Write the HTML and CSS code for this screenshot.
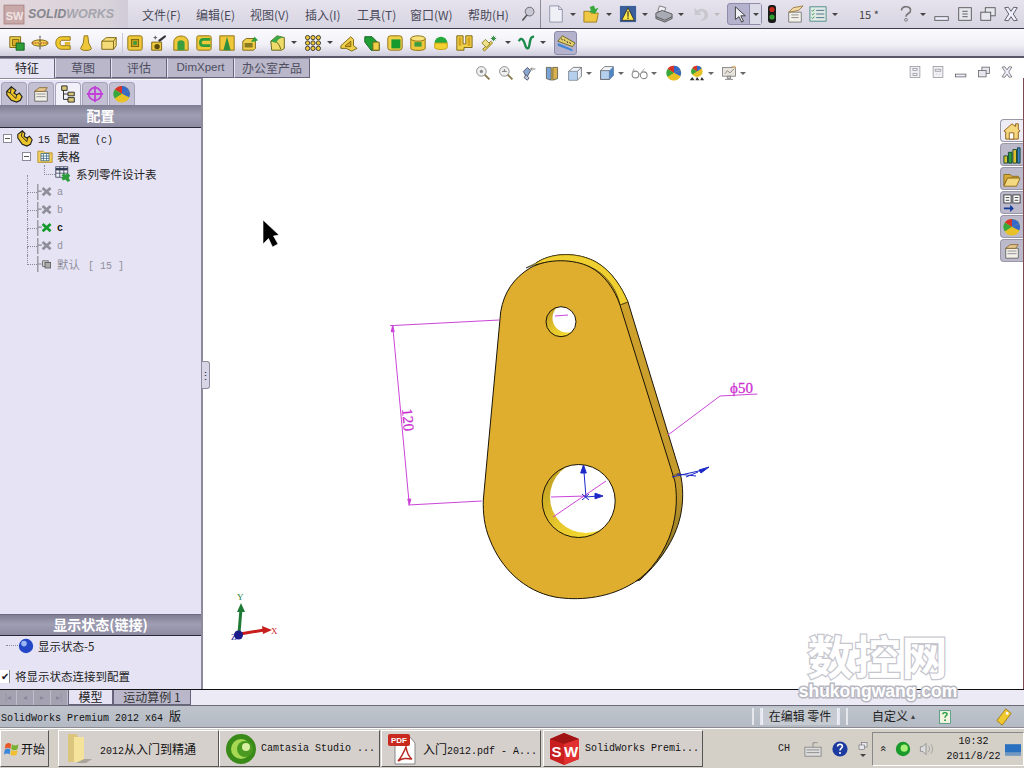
FILE: index.html
```html
<!DOCTYPE html>
<html lang="zh">
<head>
<meta charset="utf-8">
<title>SolidWorks Premium 2012</title>
<link rel="stylesheet" href="styles.css">
</head>
<body>
<svg class="defs" width="0" height="0" aria-hidden="true">
<defs>
<symbol id="boss" viewBox="0 0 20 20"><path d="M2 3h12v12H2z" fill="#f0cf4a" stroke="#77610f"/><path d="M5 6h7v7H5z" fill="#d9ac28" stroke="#77610f"/><path d="M9 10h9v8H9z" fill="#2e9e3c" stroke="#135c1d"/></symbol>
<symbol id="rev" viewBox="0 0 20 20"><ellipse cx="10" cy="10" rx="9" ry="3.5" fill="#f3d04c" stroke="#77610f"/><path d="M10 2v16" stroke="#333" stroke-dasharray="3 1"/><path d="M1 10h18" stroke="#a33" stroke-dasharray="2 1"/></symbol>
<symbol id="sweep" viewBox="0 0 20 20"><path d="M18 3H9C3 3 2 8 2 10s1 7 7 7h9v-4H9c-3 0-3-6 0-6h9z" fill="#f0c92e" stroke="#8a6d0d"/><path d="M12 9h6v3h-6z" fill="#e2b11e"/></symbol>
<symbol id="loft" viewBox="0 0 20 20"><path d="M8 2h4l1 8 3 6c0 3-12 3-12 0l3-6z" fill="#eec83a" stroke="#8a6d0d"/></symbol>
<symbol id="bound" viewBox="0 0 20 20"><path d="M2 8l5-4h11v9l-3 4H2z" fill="#f5dc78" stroke="#77610f"/><path d="M2 8h13v9M15 8l3-4" fill="none" stroke="#77610f"/></symbol>
<symbol id="cut" viewBox="0 0 20 20"><rect x="2" y="2" width="16" height="16" rx="2" fill="#eec83a" stroke="#8a6d0d"/><rect x="6" y="6" width="8" height="8" fill="#c99d1c" stroke="#77610f"/><rect x="8" y="8" width="4" height="4" fill="#3a9e3e"/></symbol>
<symbol id="wiz" viewBox="0 0 20 20"><path d="M3 9h11v9H3z" fill="#eec83a" stroke="#77610f"/><circle cx="9" cy="14" r="3" fill="#5a4a10"/><path d="M10 7l8-6 1 2-7 6z" fill="#333"/><path d="M7 2v4M5 4h4" stroke="#555"/></symbol>
<symbol id="arch" viewBox="0 0 20 20"><path d="M2 18V9c0-9 16-9 16 0v9z" fill="#eec83a" stroke="#8a6d0d"/><path d="M6 18V10c0-4 8-4 8 0v8z" fill="#3a9e3e"/></symbol>
<symbol id="csweep" viewBox="0 0 20 20"><rect x="2" y="2" width="16" height="16" rx="2" fill="#eec83a" stroke="#8a6d0d"/><path d="M17 6H9c-4 0-4 7 0 7h8" fill="none" stroke="#2e9e3c" stroke-width="3"/></symbol>
<symbol id="cloft" viewBox="0 0 20 20"><path d="M2 2h16v16H2z" fill="#eec83a" stroke="#8a6d0d"/><path d="M10 3l4 15H6z" fill="#2e8e3c"/></symbol>
<symbol id="cbound" viewBox="0 0 20 20"><path d="M2 8l4-3h10v11l-2 2H2z" fill="#f0cf4a" stroke="#77610f"/><path d="M4 10h9v5H4z" fill="#8a7a20"/><path d="M11 9l4-6 4 4-3 1z" fill="#2e9e3c"/></symbol>
<symbol id="fillet" viewBox="0 0 20 20"><path d="M2 8l7-6 8 2v12l-3 2H3z" fill="#efdb6a" stroke="#5c5c10"/><path d="M2 8c5-1 9 1 11 9" fill="none" stroke="#5c5c10"/><path d="M2 8l7-6 8 2c-5 0-8 3-9 6z" fill="#3aa84a"/></symbol>
<symbol id="pattern" viewBox="0 0 20 20"><g fill="#eec83a" stroke="#333"><circle cx="4" cy="4" r="2.4"/><circle cx="10" cy="4" r="2.4"/><circle cx="16" cy="4" r="2.4"/><circle cx="4" cy="10" r="2.4"/><circle cx="10" cy="10" r="2.4"/><circle cx="16" cy="10" r="2.4"/><circle cx="4" cy="16" r="2.4"/><circle cx="10" cy="16" r="2.4"/><circle cx="16" cy="16" r="2.4"/></g></symbol>
<symbol id="rib" viewBox="0 0 20 20"><path d="M1 13L12 3l3 3v7l4 3-6 3-6-3-6 0z" fill="#f0cf4a" stroke="#77610f"/><path d="M6 13l6-5v6H6z" fill="#d3a51e" stroke="#77610f"/></symbol>
<symbol id="draft" viewBox="0 0 20 20"><path d="M2 3h8l8 8v7H9L2 9z" fill="#1f9e35" stroke="#0e5c1c"/><path d="M11 9h7v9h-7z" fill="#f0cf4a" stroke="#77610f"/></symbol>
<symbol id="shell" viewBox="0 0 20 20"><rect x="2" y="2" width="16" height="16" rx="3" fill="#f0cf4a" stroke="#8a6d0d"/><rect x="6" y="6" width="10" height="10" fill="#169a2d"/></symbol>
<symbol id="cyl" viewBox="0 0 20 20"><path d="M2 5v11c0 3 16 3 16 0V5z" fill="#eec83a" stroke="#8a6d0d"/><ellipse cx="10" cy="5" rx="8" ry="3" fill="#f7e27c" stroke="#8a6d0d"/><rect x="6" y="9" width="8" height="5" fill="#3a9e3e"/></symbol>
<symbol id="dome" viewBox="0 0 20 20"><path d="M3 10a7 7 0 0 1 14 0z" fill="#25a83c"/><path d="M3 10h14v5c0 3-14 3-14 0z" fill="#f2d030" stroke="#c49b12"/></symbol>
<symbol id="flex" viewBox="0 0 20 20"><path d="M2 2h7v9h3V2h7v13h-9v3H2z" fill="#f0cf4a" stroke="#77610f"/><path d="M4 4h3v9H4zM14 4h3v9h-3z" fill="#d3a51e"/></symbol>
<symbol id="wand" viewBox="0 0 20 20"><path d="M3 17l9-9 2 2-9 9z" fill="#e8d058" stroke="#8a7a20"/><path d="M2 10l4-4 5 5-4 4z" fill="#efe08a" stroke="#8a7a20"/><path d="M15 2v6M12 5h6M13 3l4 4M17 3l-4 4" stroke="#2a8a38"/></symbol>
<symbol id="curve" viewBox="0 0 20 20"><path d="M2 8c3-6 6 0 7 4s4 7 5-1 3-8 5-8" fill="none" stroke="#1c8a4a" stroke-width="2.6"/></symbol>
<symbol id="ruler" viewBox="0 0 22 22"><path d="M2 9l5-6 14 8-3 4z" fill="#e7d16a" stroke="#68602a"/><path d="M6 6l1 2M9 7l1 2M12 9l1 2M15 10l1 2" stroke="#333"/><path d="M2 11l16 7v2L2 14z" fill="#3f86d6"/></symbol>
<symbol id="pin" viewBox="0 0 20 20"><circle cx="12" cy="7" r="5.5" fill="#c8c8d4" stroke="#555"/><path d="M9 11l-6 7" stroke="#555" stroke-width="2"/></symbol>
<symbol id="doc" viewBox="0 0 20 20"><path d="M3 1h10l4 4v14H3z" fill="#eef0f6" stroke="#8c90a8"/><path d="M13 1v4h4" fill="none" stroke="#8c90a8"/></symbol>
<symbol id="open" viewBox="0 0 20 20"><path d="M1 7h6l2 2h8l-2 10H1z" fill="#f0c843" stroke="#9a7a18"/><path d="M9 1h5v4h4l-6 5-6-5h3z" fill="#38a83c" transform="rotate(-20 12 6)"/></symbol>
<symbol id="warn" viewBox="0 0 20 20"><rect x="1" y="1" width="18" height="18" fill="#3a5f9a"/><path d="M10 3l7 14H3z" fill="#ffe84a" stroke="#333"/><path d="M9.4 7h1.2v6H9.4zM9.4 14h1.2v1.6H9.4z" fill="#222"/></symbol>
<symbol id="print" viewBox="0 0 20 20"><path d="M5 1l7 2-2 6-7-2z" fill="#eef0f6" stroke="#777"/><path d="M1 9l7-3 11 4v5l-8 4-10-4z" fill="#a8aab4" stroke="#555"/><path d="M1 13l10 4 8-4" fill="none" stroke="#555"/></symbol>
<symbol id="undo" viewBox="0 0 20 20"><path d="M4 3v8h8L9 8c3-2 6 0 6 3s-2 5-5 6c5 1 9-2 9-6 0-6-7-9-12-5z" fill="#c8c8ce"/></symbol>
<symbol id="arrow" viewBox="0 0 20 20"><path d="M6 2v14l4-3 3 6 2-1-3-6h5z" fill="#eef0f6" stroke="#333"/></symbol>
<symbol id="light" viewBox="0 0 10 20"><rect x="1" y="1" width="8" height="18" rx="3" fill="#1a1a1a"/><circle cx="5" cy="5.5" r="2.6" fill="#c92a1c"/><circle cx="5" cy="13" r="2.6" fill="#2e9e2e"/></symbol>
<symbol id="prop" viewBox="0 0 20 20"><path d="M3 8h14v11H3z" fill="#f2f0e8" stroke="#777"/><path d="M6 11h8M6 14h8" stroke="#888"/><path d="M3 8l5-5 11-2-5 5z" fill="#f3d9a4" stroke="#9a7a40"/></symbol>
<symbol id="opts" viewBox="0 0 20 20"><rect x="1" y="2" width="18" height="16" fill="#dfe9e6" stroke="#4a8a84"/><path d="M8 6h9M8 10h9M8 14h9" stroke="#4a6a80"/><path d="M3 6l1 1 2-2M3 10l1 1 2-2M3 14l1 1 2-2" fill="none" stroke="#2a8a3c"/></symbol>
<symbol id="help" viewBox="0 0 20 20"><path d="M5 6c0-6 11-5 10 0 0 4-5 3-5 7" fill="none" stroke="#777" stroke-width="1.800"/><circle cx="10" cy="16.500" r="1.600" fill="none" stroke="#777"/></symbol>
<symbol id="w-min" viewBox="0 0 20 20"><rect x="2" y="13" width="15" height="4" fill="#eef" stroke="#555"/></symbol>
<symbol id="w-full" viewBox="0 0 20 20"><rect x="3" y="3" width="14" height="14" fill="#e6e6ee" stroke="#555"/><path d="M7 7h6M7 10h6M7 13h6" stroke="#555"/></symbol>
<symbol id="w-res" viewBox="0 0 20 20"><rect x="7" y="3" width="11" height="9" fill="#e6e6ee" stroke="#555"/><rect x="2" y="8" width="11" height="9" fill="#e6e6ee" stroke="#555"/></symbol>
<symbol id="w-x" viewBox="0 0 20 20"><path d="M3 3l4-.5L10 7l3-4.500 4 .5-4.500 7 4.500 7-4 .5-3-4.500-3 4.500-4-.5L7.500 10z" fill="#eef" stroke="#555"/></symbol>
<symbol id="t-conf" viewBox="0 0 20 20"><path d="M2 7l5-5 5 4-2 3 3 2 3-2 3 4-2 4-4 2-6-2-5-6z" fill="#eec62c" stroke="#222" stroke-width="1.300"/><path d="M7 2L6 9l6 6 1-4M2 7l4 2" fill="none" stroke="#222"/></symbol>
<symbol id="t-prop" viewBox="0 0 20 20"><path d="M3 7h14v11H3z" fill="#f2f0e8" stroke="#666"/><path d="M5 10h10M5 13h10" stroke="#888"/><path d="M3 7l5-4h9l-3 4z" fill="#e7c890" stroke="#8a6a30"/></symbol>
<symbol id="t-cfg" viewBox="0 0 20 20"><path d="M3 1h6v5H3zM10 8h7v4h-7zM10 14h7v5h-7z" fill="#d9c878" stroke="#222"/><path d="M5 6v10h5M5 10h5" fill="none" stroke="#222"/></symbol>
<symbol id="t-dim" viewBox="0 0 20 20"><circle cx="10" cy="10" r="7" fill="none" stroke="#c040d8" stroke-width="2"/><path d="M10 1v18M1 10h18" stroke="#c040d8" stroke-width="2"/></symbol>
<symbol id="ball" viewBox="0 0 20 20"><circle cx="10" cy="10" r="9" fill="#e9c126"/><path d="M10 10L2 5a9 9 0 0 1 8-4z" fill="#d6332a"/><path d="M10 10V1a9 9 0 0 1 8 5z" fill="#3569c9"/><path d="M10 10l8-4a9 9 0 0 1 0 8z" fill="#3569c9"/><path d="M10 10l-8-5a9 9 0 0 0 0 10z" fill="#38a83c"/><path d="M10 10l8 4a9 9 0 0 1-16 1z" fill="#e8c126"/></symbol>
<symbol id="part" viewBox="0 0 20 20"><path d="M2 6l5-4 3 3-1 3 3 2 3-2 3 4-2 5-4 2-5-2-5-7z" fill="#edc32a" stroke="#222" stroke-width="1.200"/><path d="M7 2L6 8l6 6 1-4" fill="none" stroke="#222"/></symbol>
<symbol id="folder" viewBox="0 0 20 20"><path d="M1 4h7l2 2h9v12H1z" fill="#f3cf63" stroke="#b08b1f"/><rect x="5" y="7" width="10" height="9" fill="#fff" stroke="#3a6a88"/><path d="M5 10h10M5 13h10M8 7v9M12 7v9" stroke="#3a6a88"/></symbol>
<symbol id="table" viewBox="0 0 20 20"><rect x="1" y="1" width="15" height="13" fill="#f2f2fa" stroke="#333b55"/><path d="M1 4h15" stroke="#333b55" stroke-width="3"/><path d="M1 9h15M6 1v13M11 1v13" stroke="#333b55"/><path d="M8 12l3-3 2 2 3-2 3 3-2 3 2 3-3 2-3-3-3 1-2-3 2-2z" fill="#2a9a3a"/></symbol>
<symbol id="cfg-x" viewBox="0 0 20 20"><path d="M1 0v20M1 9h5" stroke="#8a8a90" stroke-width="1.500" fill="none"/><path d="M7 5l10 9M17 5L7 14" stroke="currentColor" stroke-width="3.400" fill="none"/></symbol>
<symbol id="cfg-def" viewBox="0 0 20 20"><path d="M1 0v20M1 10h5" stroke="#8a8a90" stroke-width="1.500" fill="none"/><rect x="7" y="6" width="7" height="7" fill="#ccc" stroke="#666"/><rect x="10" y="8" width="7" height="7" fill="#aaa" stroke="#555"/></symbol>
<symbol id="sphere" viewBox="0 0 20 20"><circle cx="10" cy="10" r="9" fill="#2447c8"/><circle cx="7.500" cy="7" r="3.500" fill="#9ab6f4"/></symbol>
<symbol id="zoomfit" viewBox="0 0 20 20"><circle cx="8" cy="8" r="6" fill="#eef0f0" stroke="#777"/><circle cx="8" cy="8" r="2" fill="#888"/><path d="M12 12l6 6" stroke="#8a7a50" stroke-width="2.4"/></symbol>
<symbol id="zoomarea" viewBox="0 0 20 20"><circle cx="8" cy="8" r="6" fill="#eef0f0" stroke="#777"/><path d="M5 8h6M8 5v3" stroke="#666"/><path d="M12 12l6 6" stroke="#8a7a50" stroke-width="2.4"/></symbol>
<symbol id="prev" viewBox="0 0 20 20"><path d="M3 8l5-5 4 4-5 9z" fill="#8aa6cf" stroke="#445"/><path d="M6 12l4 4-2 3-4-3z" fill="#bccbe2" stroke="#445"/><path d="M12 5h6M14 3l-2 2 2 2" fill="none" stroke="#666"/></symbol>
<symbol id="section" viewBox="0 0 20 20"><path d="M3 3h6v16l-6-2z" fill="#7aa4d8" stroke="#554"/><path d="M11 3h6v14l-6 2z" fill="#d9b24c" stroke="#554"/><path d="M9 3h2v16H9z" fill="#a88a3a"/></symbol>
<symbol id="orient" viewBox="0 0 20 20"><path d="M2 8l6-5h10v11l-5 5H2z" fill="#eef2fa" stroke="#666"/><path d="M2 8h11v11M13 8l5-5" fill="none" stroke="#666"/><path d="M2 8h11v11H2z" fill="#9dc0e8" opacity=".7"/></symbol>
<symbol id="cube" viewBox="0 0 20 20"><path d="M2 7l5-5h11v11l-5 5H2z" fill="#f2f5fb" stroke="#666"/><path d="M2 7h11v11H2z" fill="#b5d0ee" stroke="#666"/><path d="M13 7l5-5v11l-5 5z" fill="#4e86c6"/></symbol>
<symbol id="glasses" viewBox="0 0 24 20"><circle cx="6" cy="12" r="4.500" fill="none" stroke="#888" stroke-width="1.400"/><circle cx="17" cy="13" r="4.500" fill="none" stroke="#888" stroke-width="1.400"/><path d="M10 11l3 1M2 9l2-5M14 9l4-5" stroke="#888" fill="none"/></symbol>
<symbol id="scene" viewBox="0 0 20 20"><circle cx="10" cy="8" r="7" fill="#e8c126"/><path d="M10 8L4 4a7 7 0 0 1 6-3z" fill="#d6332a"/><path d="M10 8V1a7 7 0 0 1 6 3z" fill="#3569c9"/><path d="M10 8L4 4a7 7 0 0 0 0 8z" fill="#38a83c"/><path d="M1 19l3-4 3 4zM8 19l2-4 3 4zM14 19l2-4 3 4z" fill="#333"/></symbol>
<symbol id="monitor" viewBox="0 0 20 20"><rect x="2" y="3" width="16" height="11" fill="#e8e4dc" stroke="#777"/><path d="M5 11l3-4 3 3 5-5" fill="none" stroke="#777"/><path d="M12 2l6-1v4z" fill="#d9b27a"/><path d="M8 14h4v3H8zM5 18h10" stroke="#777" fill="#ccc"/></symbol>
<symbol id="w-a" viewBox="0 0 20 20"><rect x="3" y="2" width="14" height="16" fill="#f2f2f6" stroke="#8a8a92"/><rect x="7" y="5" width="6" height="3" fill="none" stroke="#8a8a92"/><path d="M7 12h6v3H7z" fill="none" stroke="#8a8a92"/></symbol>
<symbol id="w-b" viewBox="0 0 20 20"><rect x="3" y="2" width="14" height="16" fill="#f2f2f6" stroke="#8a8a92"/><path d="M6 6h8v3H6zM7 13h1M12 13h1" fill="none" stroke="#8a8a92"/></symbol>
<symbol id="home" viewBox="0 0 20 20"><path d="M1 10l9-8 4 3V2h3v6l2 2-2 1v8H3v-8z" fill="#f5d77d" stroke="#8a5a18"/><path d="M7 19v-7h5v7z" fill="#fff" stroke="#8a5a18"/></symbol>
<symbol id="bars" viewBox="0 0 20 20"><path d="M1 11h4v8H1z" fill="#d8c22c" stroke="#143"/><path d="M6 7h4v12H6z" fill="#2a9a3a" stroke="#143"/><path d="M11 4h4v15h-4z" fill="#e0c02c" stroke="#143"/><path d="M16 2h3v17h-3z" fill="#4080d0" stroke="#143"/></symbol>
<symbol id="folder2" viewBox="0 0 20 20"><path d="M1 5h7l2 2h7v2H5l-4 8z" fill="#d9ad3a" stroke="#8a6a18"/><path d="M5 9h14l-4 9H1z" fill="#f5d980" stroke="#8a6a18"/></symbol>
<symbol id="lib" viewBox="0 0 20 20"><rect x="1" y="1" width="8" height="9" fill="#fff" stroke="#333"/><rect x="11" y="1" width="8" height="9" fill="#fff" stroke="#333"/><path d="M3 4h4M3 7h4M13 4h4M13 7h4" stroke="#333"/><path d="M1 16h9" stroke="#123a9a" stroke-width="2"/><path d="M8 12l4 4-4 4z" fill="#123a9a"/></symbol>
<symbol id="win" viewBox="0 0 20 20"><path d="M2 4c3-2 5-2 7 0l-1 6c-2-2-4-2-7 0z" fill="#e8582a"/><path d="M10 4c3 2 5 2 8 0l-1 6c-3 2-5 2-8 0z" fill="#78b030"/><path d="M1 11c3-2 5-2 7 0l-1 6c-2-2-4-2-7 0z" fill="#3a86d8"/><path d="M9 11c3 2 5 2 8 0l-1 6c-3 2-5 2-8 0z" fill="#f0c030"/></symbol>
<symbol id="bigfolder" viewBox="0 0 32 32"><path d="M4 1h8l3 4v24H4z" fill="#dcc57c"/><path d="M10 4h10v25H10z" fill="#f5e39c"/><path d="M20 26h8l-6 4H12z" fill="#a8a49a"/></symbol>
<symbol id="camt" viewBox="0 0 32 32"><circle cx="16" cy="16" r="15" fill="#3a8a1a"/><circle cx="16" cy="16" r="10" fill="#a6d854"/><circle cx="20" cy="16" r="8" fill="#4a9a22"/><circle cx="21" cy="14" r="4" fill="#d8f0a0"/></symbol>
<symbol id="pdf" viewBox="0 0 32 32"><path d="M8 4h15l5 6v21H8z" fill="#fff" stroke="#888"/><rect x="1" y="1" width="22" height="12" rx="2" fill="#c8281e"/><text class="pdf-label" x="4" y="10">PDF</text><path d="M19 14c-3 7-5 11-8 14 5-3 8-3 14-2-3-2-5-6-6-12z" fill="none" stroke="#b8281e" stroke-width="1.500"/></symbol>
<symbol id="sw" viewBox="0 0 32 32"><path d="M15 0L30 6v20L15 32 1 26V6z" fill="#c81e1e"/><path d="M15 0L30 6 15 11 1 6z" fill="#a01414"/><path d="M15 11v21l15-6V6z" fill="#e03030"/><text class="sw-label" x="2.500" y="24">S</text><text class="sw-label" x="15" y="24">W</text></symbol>
<symbol id="kbd" viewBox="0 0 20 20"><rect x="1" y="8" width="18" height="10" fill="#ddd" stroke="#888"/><path d="M3 11h14M3 14h14M10 8V3h5" stroke="#888" fill="none"/></symbol>
<symbol id="helpblue" viewBox="0 0 20 20"><circle cx="10" cy="10" r="9.500" fill="#1c3aa0"/><path d="M7 7c0-4 6-4 6 0 0 2-3 2-3 5" stroke="#fff" stroke-width="2" fill="none"/><circle cx="10" cy="15" r="1.300" fill="#fff"/></symbol>
<symbol id="greenring" viewBox="0 0 20 20"><circle cx="10" cy="10" r="9" fill="#1a9a2a"/><circle cx="11.500" cy="9" r="4.500" fill="#a8f07a"/></symbol>
<symbol id="speaker" viewBox="0 0 20 20"><path d="M3 7h3l4-4v14l-4-4H3z" fill="#ddd" stroke="#888"/><path d="M13 6c2 3 2 5 0 8M16 4c3 4 3 8 0 12" stroke="#999" fill="none"/></symbol>
<symbol id="screen" viewBox="0 0 20 20"><rect x="0" y="4" width="20" height="14" fill="#2a70c0"/><rect x="0" y="14" width="20" height="4" fill="#7098c0"/></symbol>
<symbol id="tag" viewBox="0 0 20 20"><path d="M12 1l6 5-10 13-6-5z" fill="#f0c830" stroke="#a07a10"/><circle cx="13.500" cy="6" r="1.500" fill="#fff"/></symbol>
<symbol id="qbook" viewBox="0 0 20 20"><rect x="2" y="1" width="16" height="18" fill="#f4f4e0" stroke="#2a8a6a"/><path d="M7 6c0-3 6-3 6 0 0 2-3 2-3 5" stroke="#1a9a3a" stroke-width="2" fill="none"/><circle cx="10" cy="14.500" r="1.300" fill="#1a9a3a"/></symbol>
<linearGradient id="crescent" x1="0" y1="0" x2="1" y2="1"><stop offset="0" stop-color="#b89520"/><stop offset=".5" stop-color="#e6c62c"/><stop offset="1" stop-color="#fbe632"/></linearGradient>
<linearGradient id="rim" x1="0" y1="0" x2="0" y2="1"><stop offset="0" stop-color="#d3a42c"/><stop offset=".7" stop-color="#c39a2c"/><stop offset="1" stop-color="#6e6420"/></linearGradient>
<clipPath id="big-hole"><circle cx="578.700" cy="501" r="36.500"/></clipPath>
<clipPath id="small-hole"><circle cx="561" cy="321.700" r="15"/></clipPath>
</defs>
</svg>

<div class="app">
  <header class="titlebar">
    <div class="logo">
      <svg class="logo-mark" viewBox="0 0 20 20"><rect x="1" y="2" width="18" height="17" fill="#c9a8a8" stroke="#b08a8a"/><text class="logo-sw" x="2.500" y="15">SW</text></svg>
      <span class="logo-text">SOLID<span class="logo-thin">WORKS</span></span>
    </div>
    <nav class="menu">
      <span class="menu-item m1">文件(F)</span>
      <span class="menu-item m2">编辑(E)</span>
      <span class="menu-item m3">视图(V)</span>
      <span class="menu-item m4">插入(I)</span>
      <span class="menu-item m5">工具(T)</span>
      <span class="menu-item m6">窗口(W)</span>
      <span class="menu-item m7">帮助(H)</span>
      <svg class="ic16"><use href="#pin"/></svg>
    </nav>
    <div class="quick">
      <svg class="ic18"><use href="#doc"/></svg><i class="caret"></i>
      <svg class="ic18"><use href="#open"/></svg><i class="caret"></i>
      <svg class="ic18"><use href="#warn"/></svg><i class="caret"></i>
      <svg class="ic18"><use href="#print"/></svg><i class="caret"></i>
      <svg class="ic18"><use href="#undo"/></svg><i class="caret caret-off"></i>
      <span class="select-btn"><svg class="ic18"><use href="#arrow"/></svg><span class="select-drop"><i class="caret caret-flush"></i></span></span>
      <svg class="light"><use href="#light"/></svg>
      <svg class="ic18 q-prop"><use href="#prop"/></svg>
      <svg class="ic18"><use href="#opts"/></svg><i class="caret"></i>
      <span class="doc-name">15 *</span>
      <svg class="ic18"><use href="#help"/></svg><i class="caret"></i>
      <span class="winbtns">
        <svg class="ic18"><use href="#w-min"/></svg>
        <svg class="ic18"><use href="#w-full"/></svg>
        <svg class="ic18"><use href="#w-res"/></svg>
        <svg class="ic18"><use href="#w-x"/></svg>
      </span>
    </div>
  </header>

  <div class="cmdbar">
    <svg class="tool"><use href="#boss"/></svg>
    <svg class="tool"><use href="#rev"/></svg>
    <svg class="tool"><use href="#sweep"/></svg>
    <svg class="tool"><use href="#loft"/></svg>
    <svg class="tool"><use href="#bound"/></svg>
    <i class="cmd-sep"></i>
    <svg class="tool"><use href="#cut"/></svg>
    <svg class="tool"><use href="#wiz"/></svg>
    <svg class="tool"><use href="#arch"/></svg>
    <svg class="tool"><use href="#csweep"/></svg>
    <svg class="tool"><use href="#cloft"/></svg>
    <svg class="tool"><use href="#cbound"/></svg>
    <svg class="tool g-fillet"><use href="#fillet"/></svg><i class="caret"></i>
    <svg class="tool g-pat"><use href="#pattern"/></svg><i class="caret"></i>
    <svg class="tool g-rib"><use href="#rib"/></svg>
    <svg class="tool"><use href="#draft"/></svg>
    <svg class="tool"><use href="#shell"/></svg>
    <svg class="tool"><use href="#cyl"/></svg>
    <svg class="tool"><use href="#dome"/></svg>
    <svg class="tool"><use href="#flex"/></svg>
    <svg class="tool g-wand"><use href="#wand"/></svg><i class="caret"></i>
    <svg class="tool g-curve"><use href="#curve"/></svg><i class="caret"></i>
    <span class="ruler-btn"><svg class="ic20"><use href="#ruler"/></svg></span>
  </div>

  <main class="workspace">
    <div class="tabs">
      <span class="tab tab-active">特征</span>
      <span class="tab t-sketch">草图</span>
      <span class="tab t-eval">评估</span>
      <span class="tab t-dim-x">DimXpert</span>
      <span class="tab t-office">办公室产品</span>
    </div>
    <div class="panes">
      <aside class="panel">
        <div class="ptabs">
          <span class="ptab"><svg class="ic18"><use href="#t-conf"/></svg></span>
          <span class="ptab"><svg class="ic18"><use href="#t-prop"/></svg></span>
          <span class="ptab ptab-active"><svg class="ic18"><use href="#t-cfg"/></svg></span>
          <span class="ptab"><svg class="ic18"><use href="#t-dim"/></svg></span>
          <span class="ptab"><svg class="ic18"><use href="#ball"/></svg></span>
        </div>
        <h2 class="phead">配置</h2>
        <div class="tree">
          <div class="row lvl0"><i class="box"></i><svg class="ic18"><use href="#part"/></svg><span class="label"><span class="mono-s cfg-num">15</span>配置<span class="mono-s cfg-name">(c)</span></span></div>
          <div class="row lvl1"><i class="box"></i><svg class="ic16"><use href="#folder"/></svg><span class="label">表格</span></div>
          <div class="row lvl2"><i class="dash dash-l"></i><svg class="ic16"><use href="#table"/></svg><span class="label">系列零件设计表</span></div>
          <div class="row lvl1b off"><i class="dash"></i><svg class="ic16"><use href="#cfg-x"/></svg><span class="label mono">a</span></div>
          <div class="row lvl1b off"><i class="dash"></i><svg class="ic16"><use href="#cfg-x"/></svg><span class="label mono">b</span></div>
          <div class="row lvl1b on"><i class="dash"></i><svg class="ic16"><use href="#cfg-x"/></svg><span class="label mono">c</span></div>
          <div class="row lvl1b off"><i class="dash"></i><svg class="ic16"><use href="#cfg-x"/></svg><span class="label mono">d</span></div>
          <div class="row lvl1b off"><i class="dash"></i><svg class="ic16"><use href="#cfg-def"/></svg><span class="label">默认<span class="mono-s cfg-size">[ 15 ]</span></span></div>
        </div>
        <h2 class="phead phead-low">显示状态(链接)</h2>
        <div class="states">
          <div class="state"><i class="dash dash-s"></i><svg class="ic16"><use href="#sphere"/></svg><span class="label">显示状态-5</span></div>
          <label class="link"><i class="check">✔</i><span class="label">将显示状态连接到配置</span></label>
        </div>
      </aside>
      <section class="canvas">
        <svg class="scene-svg" viewBox="203 78 821 612">
          <path class="back" d="M536 263C552 252 578 252 596 262C612 271 622 288 628 302L678 466C683 480 684 497 681 513C677 535 664 558 640 580L600 590L540 280Z"/>
          <path class="bevel" d="M526 268C550 258 585 258 604 276C613 285 618 295 620 305L628 302C622 288 612 271 596 262C578 252 552 252 536 263Z"/>
          <path class="face" d="M500.700 311.700C504 292 514 278 530 268C548 258 574 259 590 267C604 274 615 290 620 305L675 481.700C678 500 676 520 669 538C660 560 646 577 628 586C606 598 578 601 555 597C524 591 501 568 490 540C484 526 483 512 483.300 500Z"/>
          <path class="seam" d="M620 305L628 302M672 476L680 473"/>
          <circle class="hole-in" cx="561" cy="321.700" r="15"/>
          <circle class="hole-white" cx="567" cy="318" r="14.500" clip-path="url(#small-hole)"/>
          <circle class="hole-edge" cx="561" cy="321.700" r="15"/>
          <circle class="hole-in" cx="578.700" cy="501" r="36.500"/>
          <circle class="hole-white" cx="586" cy="497" r="36" clip-path="url(#big-hole)"/>
          <circle class="hole-edge" cx="578.700" cy="501" r="36.500"/>
          <g class="dim">
            <path d="M390 325.700L499.300 320M408.300 505L481.700 501M392.700 325.700L409.300 505M668 435L720 396L757.300 394M555 316L568 315"/>
            <path d="M553 517L606 481M551 497L586 496"/>
            <path class="dim-head" d="M392.700 325.700l-1.500 6h3zM409.300 505l-1.500-6h3z"/>
            <text class="dim-text" transform="translate(402 409) rotate(85)">120</text>
            <text class="dim-text" x="730" y="393">ϕ50</text>
          </g>
          <g class="axis">
            <path d="M586 497L584 472M586 497L598 496M672 477L703 470M677 474L696 476M686 477L698 472"/>
            <path class="axis-head" d="M583.500 465l2.800 8h-5.600zM603 496l-8 2.800v-5.600zM709 467l-10 3 2 3z"/>
            <path d="M582 494l7 6M589 494l-7 6"/>
          </g>
          <g class="triad">
            <path d="M239 633L241 609" stroke="#1e7a34" stroke-width="3"/>
            <path d="M241 603l4 9h-8z" fill="#1e7a34"/>
            <path d="M240 634L264 630" stroke="#c81e1e" stroke-width="3"/>
            <path d="M272 630l-9 4-1-8z" fill="#c81e1e"/>
            <circle cx="238.500" cy="635" r="4.500" fill="#1c1c8a"/>
            <text class="tri-y" x="237" y="600">Y</text>
            <text class="tri-x" x="271" y="634">X</text>
            <text class="tri-z" x="231" y="640">Z</text>
          </g>
          <path class="cursor" d="M263 220V244L268.500 238.500L272.500 247L278 244L273.500 236L279 235Z"/>
        </svg>

        <div class="viewbar">
          <svg class="ic16"><use href="#zoomfit"/></svg>
          <svg class="ic16"><use href="#zoomarea"/></svg>
          <svg class="ic16"><use href="#prev"/></svg>
          <svg class="ic16"><use href="#section"/></svg>
          <svg class="ic16"><use href="#orient"/></svg><i class="caret"></i>
          <svg class="ic16"><use href="#cube"/></svg><i class="caret"></i>
          <svg class="ic18"><use href="#glasses"/></svg><i class="caret"></i>
          <svg class="ic16 v-ball"><use href="#ball"/></svg>
          <svg class="ic16"><use href="#scene"/></svg><i class="caret"></i>
          <svg class="ic16"><use href="#monitor"/></svg><i class="caret"></i>
        </div>
        <div class="viewwin">
          <svg class="ic14"><use href="#w-a"/></svg>
          <svg class="ic14"><use href="#w-b"/></svg>
          <svg class="ic14"><use href="#w-min"/></svg>
          <svg class="ic14"><use href="#w-res"/></svg>
          <svg class="ic14"><use href="#w-x"/></svg>
        </div>

        <span class="grip">⋮</span>

        <div class="taskpane">
          <span class="tp tp-on"><svg class="ic18"><use href="#home"/></svg></span>
          <span class="tp"><svg class="ic18"><use href="#bars"/></svg></span>
          <span class="tp"><svg class="ic18"><use href="#folder2"/></svg></span>
          <span class="tp"><svg class="ic18"><use href="#lib"/></svg></span>
          <span class="tp"><svg class="ic18"><use href="#ball"/></svg></span>
          <span class="tp"><svg class="ic18"><use href="#t-prop"/></svg></span>
        </div>
      </section>
    </div>

    <div class="bottomtabs">
      <span class="navs"><i class="nav">|◂</i><i class="nav">◂</i><i class="nav">▸</i><i class="nav">▸|</i></span>
      <span class="btab btab-on">模型</span>
      <span class="btab btab-motion">运动算例 1</span>
    </div>

    <div class="watermark">
      <span class="wm-big">数控网</span>
      <span class="wm-small">shukongwang.com</span>
    </div>
  </main>

  <footer class="status">
    <span class="st-text">SolidWorks Premium 2012 x64 <span class="cjk12">版</span></span>
    <i class="st-grip"></i>
    <span class="st-cell st-edit">在编辑 零件</span>
    <i class="st-grip"></i>
    <span class="st-cell st-custom">自定义 <small class="st-up">▴</small></span>
    <svg class="ic14 st-q"><use href="#qbook"/></svg>
    <svg class="ic18 st-tag"><use href="#tag"/></svg>
  </footer>

  <div class="taskbar">
    <span class="tbtn start"><svg class="ic16"><use href="#win"/></svg><span class="cjk">开始</span></span>
    <span class="tbtn"><svg class="ic32"><use href="#bigfolder"/></svg><span class="tb-name">2012<span class="cjk12">从入门到精通</span></span></span>
    <span class="tbtn"><svg class="ic32"><use href="#camt"/></svg><span class="tb-name">Camtasia Studio ...</span></span>
    <span class="tbtn tb-pdf"><svg class="ic32"><use href="#pdf"/></svg><span class="tb-name"><span class="cjk12">入门</span>2012.pdf - A...</span></span>
    <span class="tbtn tb-sw"><svg class="ic32"><use href="#sw"/></svg><span class="tb-name">SolidWorks Premi...</span></span>
    <div class="langbar">
      <span class="lang">CH</span>
      <svg class="ic18"><use href="#kbd"/></svg>
      <svg class="ic16"><use href="#helpblue"/></svg>
      <span class="lang-rest"><svg class="ic10"><use href="#w-res"/></svg><i class="caret caret-flush"></i></span>
    </div>
    <div class="tray">
      <span class="tray-up">«</span>
      <svg class="ic16 tr-green"><use href="#greenring"/></svg>
      <svg class="ic16 tr-spk"><use href="#speaker"/></svg>
      <span class="clock">10:32<br>2011/8/22</span>
      <svg class="ic16 tr-scr"><use href="#screen"/></svg>
    </div>
  </div>
</div>
</body>
</html>
```
FILE: styles.css
```css
* { box-sizing: border-box; }
html, body { margin: 0; padding: 0; }
body { width: 1024px; height: 768px; overflow: hidden; font: 12px "Noto Sans CJK SC", "Liberation Sans", sans-serif; color: #222; background: #d4d0c8; }
.defs { position: absolute; }
svg { flex: none; display: block; }
i { font-style: normal; }
.ic10 { width: 10px; height: 10px; }
.ic14 { width: 14px; height: 14px; }
.ic16 { width: 16px; height: 16px; }
.ic18 { width: 18px; height: 18px; }
.ic20 { width: 20px; height: 20px; }
.ic32 { width: 32px; height: 32px; }
.app { width: 1024px; height: 768px; display: flex; flex-direction: column; }
.cjk12 { font: 12px "Noto Sans CJK SC", sans-serif; }
.pdf-label { font: bold 8px "Liberation Sans", sans-serif; fill: #fff; }
.sw-label { font: bold 15px "Liberation Sans", sans-serif; fill: #fff; }
.logo-sw { font: bold 10px "Liberation Sans", sans-serif; fill: #efe4e4; }

.caret { width: 0; height: 0; flex: none; border: 3px solid transparent; border-top: 3px solid #444; border-bottom: 0; margin: 0 5px 0 7px; }
.caret-off { border-top-color: #bbb; }
.caret-flush { margin: 0; }

.titlebar { height: 29px; flex: none; display: flex; align-items: center; background: linear-gradient(#e6e3ee, #d8d5e2); border-bottom: 1px solid #3c3a48; }
.logo { width: 128px; height: 28px; flex: none; display: flex; align-items: center; gap: 3px; padding-left: 3px; background: linear-gradient(90deg, #e3d7dc, #d8d2da 85%, #cfcbd8); }
.logo-mark { width: 22px; height: 22px; }
.logo-text { font: italic bold 12.500px "Liberation Sans", sans-serif; color: #86868e; }
.logo-thin { font-weight: bold; color: #a5a5ad; }
.menu { width: 413px; height: 28px; flex: none; display: flex; align-items: center; color: #4a4a5a; font-size: 12px; border-right: 1px solid #8e8c9c; }
.menu-item { white-space: nowrap; }
.m1 { margin-left: 14px; width: 54px; }
.m2, .m3, .m5 { width: 54px; }
.m4 { width: 52px; margin-left: 1px; }
.m6 { width: 58px; margin-left: -1px; }
.m7 { width: 52px; }
.quick { display: flex; align-items: center; padding-left: 6px; flex: 1; min-width: 0; }
.quick .caret { margin: 0 7px 0 5px; }
.quick .caret-flush { margin: 0; }
.select-btn { display: flex; align-items: center; width: 35px; height: 22px; padding-left: 2px; background: #b4b2cc; border: 1px solid #8e8cab; border-radius: 3px; }
.select-btn .ic18 { margin-right: 1px; }
.select-drop { display: flex; height: 20px; width: 12px; align-items: center; justify-content: center; background: #dcdbe8; border-left: 1px solid #8e8cab; }
.light { width: 10px; height: 20px; margin: 0 9px 0 5px; }
.q-prop { margin-right: 5px; }
.doc-name { width: 38px; margin-left: 14px; font-size: 11px; color: #444; }
.winbtns { display: flex; gap: 5px; }

.cmdbar { height: 29px; flex: none; display: flex; align-items: center; padding-left: 8px; background: linear-gradient(#fbfbfe, #f0eff6 60%, #cfcddc); border-bottom: 2px solid #5a5868; }
.tool { width: 18px; height: 18px; margin-right: 5px; }
.cmd-sep { width: 1px; height: 20px; background: #c8c6d4; margin: 0 3px 0 -1px; }
.cmdbar .caret { margin: 0; }
.g-fillet { margin-left: 5px; margin-right: 4px; }
.g-pat { margin-left: 7px; margin-right: 5px; }
.g-rib { margin-left: 7px; }
.g-wand { margin-left: 2px; margin-right: 7px; }
.g-curve { margin-left: 6px; margin-right: 5px; }
.ruler-btn { display: flex; align-items: center; justify-content: center; width: 23px; height: 24px; margin-left: 8px; background: #b4b2cc; border: 1px solid #8e8cab; border-radius: 3px; }

.workspace { position: relative; flex: 1; display: flex; flex-direction: column; min-height: 0; }
.tabs { height: 20px; flex: none; display: flex; align-items: stretch; background: #fff; font-size: 12px; }
.tab { display: flex; align-items: center; justify-content: center; height: 20px; padding-bottom: 2px; background: #b9b7c9; border: 1px solid #66647a; border-top-color: #9492a8; border-left: 1px solid #e6e4f0; color: #4e4e60; width: 56px; }
.tab-active { background: #e7e5f4; width: 55px; color: #222; border-bottom: 0; border-left: 0; }
.t-eval { width: 56px; }
.t-dim-x { width: 67px; font: 11.500px "Liberation Sans", sans-serif; }
.t-office { width: 76px; }
.panes { flex: 1; display: flex; min-height: 0; border-bottom: 1px solid #111; }
.panel { width: 203px; flex: none; display: flex; flex-direction: column; background: #e6e4f4; border-right: 2px solid #8d8b9b; }
.ptabs { height: 27px; flex: none; display: flex; align-items: flex-end; gap: 1px; padding-left: 1px; border-top: 1px solid #8d8b9b; box-shadow: inset 0 1px 0 #fff; }
.ptab { width: 26px; height: 23px; display: flex; align-items: center; justify-content: center; background: #c2c0d2; border: 1px solid #a5a3b8; border-bottom: 0; border-radius: 4px 4px 0 0; }
.ptab-active { background: #f2f1fa; }
.phead { margin: 0; height: 23px; flex: none; padding-bottom: 2px; display: flex; align-items: center; justify-content: center; font-size: 14px; font-weight: bold; color: #fff; background: linear-gradient(#7f7d92, #a09eb3 45%, #8e8ca2); border-bottom: 1px solid #2a2838; }
.phead-low { height: 22px; border-top: 1px solid #6c6a80; }
.tree { flex: 1; min-height: 0; padding-top: 1px; }
.row { position: relative; height: 18px; display: flex; align-items: center; gap: 2px; white-space: nowrap; }
.label { font-size: 11.500px; line-height: 18px; color: #222; }
.mono { font: 10px "Liberation Mono", monospace; }
.mono-s { font: 10px "Liberation Mono", monospace; }
.cfg-num { margin-right: 7px; }
.cfg-name { margin-left: 15px; }
.cfg-size { margin-left: 8px; white-space: pre; }
.lvl0 { padding-left: 3px; }
.lvl0 .ic18 { margin-left: 2px; margin-right: 2px; }
.lvl1 { padding-left: 22px; }
.lvl1 .ic16 { margin-left: 4px; margin-right: 2px; }
.lvl2 { padding-left: 55px; }
.lvl2 .ic16 { margin-right: 3px; }
.lvl1b { padding-left: 37px; }
.lvl1b .ic16 { margin-right: 2px; }
.box { width: 9px; height: 9px; flex: none; border: 1px solid #8a8a98; background: linear-gradient(90deg, transparent 1px, #555 1px, #555 6px, transparent 6px) center / 100% 1px no-repeat #fff; }
.dash { position: absolute; left: 27px; top: 0; width: 10px; height: 10px; border-left: 1px dotted #8a8a98; border-bottom: 1px dotted #8a8a98; }
.dash-l { left: 44px; width: 11px; }
.lvl1b .dash::before { content: ""; position: absolute; left: -1px; top: -8px; height: 8px; border-left: 1px dotted #8a8a98; }
.off { color: #8f8f9a; }
.off .label { color: #8f8f9a; }
.on { color: #169a2d; }
.on .label { color: #111; font-weight: bold; }
.states { height: 53px; flex: none; position: relative; }
.state { position: relative; height: 19px; display: flex; align-items: center; gap: 4px; padding-left: 18px; }
.dash-s { left: 6px; top: 9px; width: 12px; height: 1px; border-left: 0; }
.link { position: absolute; left: 0; top: 31px; display: flex; align-items: center; gap: 5px; }
.check { width: 10px; height: 13px; display: flex; align-items: center; justify-content: center; background: #fff; border-right: 1px solid #888; font-size: 10px; line-height: 1; color: #111; }

.canvas { position: relative; flex: 1; background: #fff; border-right: 1px solid #7a4a50; }
.scene-svg { position: absolute; left: 0; top: 0; width: 821px; height: 612px; }
.face { fill: #e0ae2e; stroke: #1a1508; stroke-width: 1; }
.back { fill: url(#rim); stroke: #1a1508; stroke-width: 1; }
.bevel { fill: #f0cf30; stroke: #1a1508; stroke-width: .6; }
.seam { stroke: #6a5414; fill: none; }
.hole-in { fill: url(#crescent); }
.hole-white { fill: #fff; }
.hole-edge { fill: none; stroke: #1a1508; stroke-width: 1; }
.dim path { fill: none; stroke: #cc44d8; stroke-width: 1; }
.dim .dim-head { fill: #cc44d8; }
.dim-text { font: 15px "Liberation Serif", serif; fill: #cc30d0; stroke: #cc30d0; stroke-width: .3; }
.axis path { fill: none; stroke: #1c28c8; stroke-width: 1; }
.axis .axis-head { fill: #1c28c8; }
.triad text { font: 9px "Liberation Serif", serif; }
.tri-y { fill: #1e7a34; }
.tri-x { fill: #c81e1e; }
.tri-z { fill: #1c1c8a; }
.cursor { fill: #000; stroke: #fff; stroke-width: .6; }

.viewbar { position: absolute; left: 272px; top: -14px; display: flex; align-items: center; }
.viewbar .ic16 { margin-right: 7px; }
.viewbar .ic16:has(+ .caret) { margin-right: 0; }
.viewbar .caret { margin: 0 7px 0 3px; border-top-color: #666; }
.viewbar .ic18 { margin-right: -1px; }
.viewbar .v-ball { margin-left: 2px; }
.viewwin { position: absolute; right: 9px; top: -13px; display: flex; gap: 9px; }
.grip { position: absolute; left: -1px; top: 283px; width: 8px; height: 28px; display: flex; align-items: center; justify-content: center; background: #d8d6e6; border: 1px solid #8d8b9b; border-left: 0; border-radius: 0 3px 3px 0; font-size: 11px; line-height: 1; color: #223; }
.taskpane { position: absolute; right: 0; top: 41px; width: 23px; display: flex; flex-direction: column; gap: 1px; }
.tp { height: 23px; display: flex; align-items: center; justify-content: center; background: #bcbaca; border: 1px solid #9a98a8; border-right: 0; border-radius: 4px 0 0 4px; }
.tp-on { background: #eeedf6; }

.bottomtabs { height: 15px; flex: none; display: flex; align-items: stretch; background: #eceaf5; font-size: 12px; }
.navs { width: 68px; display: flex; background: #a4a2b0; }
.nav { flex: 1; font-size: 8px; line-height: 14px; text-align: center; color: #8a8898; border-right: 1px solid #c0bece; }
.btab { display: flex; align-items: center; justify-content: center; height: 15px; width: 45px; line-height: 14px; background: #e6e4f4; border: 1px solid #66647a; border-top: 0; }
.btab-motion { width: 78px; background: #b9b7c9; color: #333; }

.watermark { position: absolute; left: 793px; top: 570px; width: 170px; display: flex; flex-direction: column; align-items: center; pointer-events: none; }
.wm-big { font: bold 46px/52px "Noto Sans CJK SC", sans-serif; color: #fff; -webkit-text-stroke: 2.500px #c6c6ce; paint-order: stroke fill; letter-spacing: 1px; }
.wm-small { margin-top: 3px; font: bold 17.500px/16px "Liberation Sans", sans-serif; color: #fff; -webkit-text-stroke: 3px #b8b8c2; paint-order: stroke fill; }

.status { height: 23px; flex: none; display: flex; align-items: center; background: linear-gradient(#bfc4cc, #b4bac4); border-top: 1px solid #6a6a78; border-bottom: 1px solid #8a8a90; }
.st-text { width: 752px; padding: 0 0 3px 1px; font: 10px "Liberation Mono", "Noto Sans CJK SC", monospace; color: #111; }
.st-grip { width: 10px; height: 17px; border-left: 2px solid #e6e8ee; border-right: 2px solid #e6e8ee; }
.st-cell { height: 17px; display: flex; align-items: center; font-size: 12px; color: #222; padding-bottom: 2px; }
.st-edit { width: 76px; justify-content: center; border-left: 1px solid #eef; border-right: 1px solid #eef; background: #c6cbd2; }
.st-custom { width: 60px; margin-left: 24px; gap: 3px; }
.st-up { font-size: 8px; color: #444; }
.st-q { margin-left: 6px; }
.st-tag { margin-left: 43px; }

.taskbar { height: 40px; flex: none; display: flex; align-items: center; background: #d4d0c8; border-top: 1px solid #fff; }
.tbtn { width: 161px; height: 37px; display: flex; align-items: center; gap: 2px; padding-left: 5px; background: #d6d0cc; border: 1px solid; border-color: #fff #555 #555 #fff; font: 10px "Liberation Mono", "Noto Sans CJK SC", monospace; color: #111; white-space: nowrap; }
.start { width: 49px; padding-left: 3px; margin-right: 9px; font-size: 12px; gap: 1px; }
.cjk { font-family: "Noto Sans CJK SC", sans-serif; color: #111; }
.tb-name { padding-left: 2px; }
.tb-pdf { width: 160px; margin-left: 1px; }
.tb-sw { width: 160px; margin-left: 2px; }
.langbar { display: flex; align-items: center; gap: 10px; margin-left: 75px; width: 94px; flex: none; font: 10px "Liberation Mono", monospace; }
.lang { width: 16px; }
.lang-rest { width: 10px; display: flex; flex-direction: column; align-items: center; gap: 3px; }
.tray { flex: 1; height: 34px; display: flex; align-items: center; padding-left: 5px; border: 1px solid; border-color: #888 #fff #fff #888; font: 10px "Liberation Mono", monospace; }
.tray-up { width: 8px; font-size: 11px; line-height: 1; text-align: center; transform: rotate(90deg); }
.tr-green { margin-left: 9px; }
.tr-spk { margin-left: 7px; }
.clock { width: 55px; margin-left: 12px; text-align: center; line-height: 15px; color: #111; }
.tr-scr { margin-left: 4px; }
```
